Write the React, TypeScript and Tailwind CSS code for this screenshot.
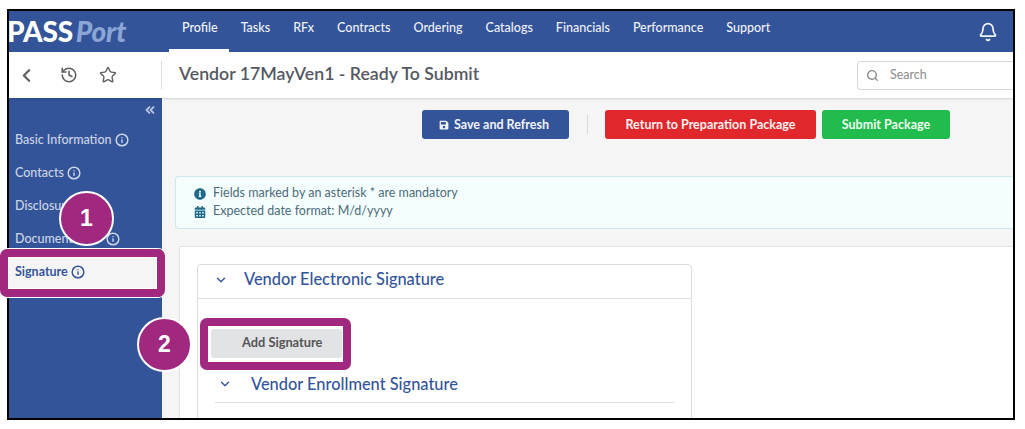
import React from "react";
import { ChevronLeft, History, Star, Bell, Search, ChevronDown, ChevronsLeft, Info } from "lucide-react";
import { FaSave, FaInfoCircle, FaCalendarAlt } from "react-icons/fa";

const nav = ["Profile", "Tasks", "RFx", "Contracts", "Ordering", "Catalogs", "Financials", "Performance", "Support"];

function Row({ label, active, wide }: { label: string; active?: boolean; wide?: boolean }) {
  return (
    <div className={active ? "flex h-[33px] items-center gap-[3px] bg-[#f5f5f5] pl-[6px] pt-[1px] font-bold text-[#34549a]" : "flex h-[33px] items-center gap-[3px] pl-[6px] pt-[1px] font-medium text-[#ccd5e6]"}>
      <span className={wide ? "w-[88px] text-[12.5px]" : "text-[12.5px]"}>{label}</span>
      <Info size={14} strokeWidth={2.5} />
    </div>
  );
}

export default function App() {
  return (
    <div className="relative h-[429px] w-[1025px] overflow-hidden bg-white font-['Lato',sans-serif]">
      <div className="ml-[7px] mt-[9px] flex h-[411px] w-[1008px] flex-col overflow-hidden border-2 border-black bg-[#f5f5f5]">
        <header className="flex h-[41px] shrink-0 items-center bg-[#34549a]">
          <div className="-ml-[2px] w-[162px] whitespace-nowrap pb-[2px] text-[28px] leading-none tracking-[-0.2px]">
            <span className="font-black text-white">PASS</span>
            <span className="ml-[3px] font-black italic text-[#8ba5d4]">Port</span>
          </div>
          <nav className="flex h-full">
            {nav.map((n, i) => (
              <div key={n} className={i === 0 ? "flex h-full items-center border-b-[3px] border-white pb-[3px] pl-[13px] pr-[11.5px] text-[12.5px] font-medium text-[#f1f3f8]" : "flex h-full items-center px-[11.5px] pb-[6px] text-[12.5px] font-medium text-[#eef1f7]"}>
                {n}
              </div>
            ))}
          </nav>
          <Bell size={20} className="ml-auto mr-[15px] mt-[1px] text-[#f1f3f8]" strokeWidth={2.1} />
        </header>

        <div className="z-10 flex h-[46px] shrink-0 items-center bg-white shadow-[0_1px_2px_rgba(0,0,0,0.15)]">
          <div className="flex h-[28px] w-[153px] items-center border-r border-[#dddddd] pl-[7px] text-[#5f5f5f]">
            <ChevronLeft size={21} strokeWidth={2.6} />
            <History size={18} strokeWidth={2.1} className="ml-[23px]" />
            <Star size={18} strokeWidth={1.9} className="ml-[21px]" />
          </div>
          <h1 className="ml-[17px] pb-[2px] text-[17.7px] font-semibold text-[#55595f]">Vendor 17MayVen1 - Ready To Submit</h1>
          <div className="ml-auto flex h-[29px] w-[156px] items-center gap-[11px] rounded-l-[4px] border border-r-0 border-[#d8d8d8] pl-[8px] text-[#8a8a8a]">
            <Search size={13} strokeWidth={2.6} />
            <span className="text-[12.5px]">Search</span>
          </div>
        </div>

        <div className="flex min-h-0 flex-1">
          <aside className="w-[153px] shrink-0 bg-[#34549a]">
            <div className="flex h-[25px] justify-end pr-[5px] pt-[5px] text-[#b5c3df]">
              <ChevronsLeft size={14} strokeWidth={3.2} />
            </div>
            <Row label="Basic Information" />
            <Row label="Contacts" />
            <Row label="Disclosures" />
            <Row label="Documents" wide />
            <Row label="Signature" active />
          </aside>

          <main className="min-w-0 flex-1">
            <div className="ml-[260px] mt-[12px] flex h-[29px] items-center">
              <button className="flex h-[29px] w-[147px] items-center justify-center gap-[5px] rounded-[3px] bg-[#34549a] pr-[3px] pt-[1px] text-[12.5px] font-bold text-[#f1f3f8]">
                <FaSave size={10} />
                Save and Refresh
              </button>
              <div className="ml-[18px] h-[19px] w-px bg-[#d8d8d8]" />
              <button className="ml-[17px] h-[29px] w-[211px] rounded-[3px] bg-[#e0282c] pt-[1px] text-[12.5px] font-bold text-[#fbeeee]">
                Return to Preparation Package
              </button>
              <button className="ml-[6px] h-[29px] w-[128px] rounded-[3px] bg-[#22bb4d] pt-[1px] text-[12.5px] font-bold text-[#eefbf1]">
                Submit Package
              </button>
            </div>

            <div className="ml-[13px] mt-[37px] flex h-[53px] flex-col justify-center gap-[2px] rounded-l-[4px] border border-r-0 border-[#cfe6ec] bg-[#f4feff] pl-[18px] text-[12.5px] text-[#4d6b78]">
              <div className="flex h-[16px] items-center gap-[7px]">
                <FaInfoCircle size={12} className="text-[#1f6b87]" />
                <span>Fields marked by an asterisk * are mandatory</span>
              </div>
              <div className="flex h-[16px] items-center gap-[7px]">
                <FaCalendarAlt size={12} className="text-[#1f6b87]" />
                <span>Expected date format: M/d/yyyy</span>
              </div>
            </div>

            <section className="ml-[17px] mt-[17px] h-[200px] border border-r-0 border-[#e2e2e2] bg-white pl-[17px] pt-[17px]">
              <div className="h-[200px] w-[495px] rounded-t-[4px] border border-[#dddddd]">
                <div className="flex h-[34px] items-center gap-[16px] border-b border-[#dddddd] pb-[4px] pl-[16px] text-[#34549a]">
                  <ChevronDown size={14} strokeWidth={2.4} />
                  <span className="text-[16.4px] font-medium">Vendor Electronic Signature</span>
                </div>
                <div className="ml-[13px] mt-[30px] flex h-[29px] w-[131px] items-center rounded-[3px] bg-[#e2e3e5] pb-[1px] pl-[31px] text-[12.8px] font-bold text-[#555555]">
                  Add Signature
                </div>
                <div className="ml-[17px] mt-[13px] flex h-[32px] w-[459px] items-center gap-[19px] border-b border-[#dddddd] pb-[5px] pl-[3px] text-[#34549a]">
                  <ChevronDown size={14} strokeWidth={2.4} />
                  <span className="text-[16.4px] font-medium">Vendor Enrollment Signature</span>
                </div>
              </div>
            </section>
          </main>
        </div>
      </div>

      {/* annotations */}
      <div className="absolute left-0 top-[249px] h-[48px] w-[165px] rounded-[7px] border-[8px] border-[#a0287f] shadow-[0_0_0_1px_#ffffff,inset_0_0_0_1px_#ffffff]" />
      <div className="absolute left-[200px] top-[318px] h-[52px] w-[151px] rounded-[7px] border-[8px] border-[#a0287f] shadow-[0_0_0_1px_#ffffff,inset_0_0_0_1px_#ffffff]" />
      <div className="absolute left-[59px] top-[191px] flex h-[55px] w-[55px] items-center justify-center rounded-full border-2 border-white bg-[#a0287f] font-['Liberation_Sans',sans-serif] text-[23px] font-bold text-white">1</div>
      <div className="absolute left-[137px] top-[317px] flex h-[55px] w-[55px] items-center justify-center rounded-full border-2 border-white bg-[#a0287f] font-['Liberation_Sans',sans-serif] text-[23px] font-bold text-white">2</div>
    </div>
  );
}
